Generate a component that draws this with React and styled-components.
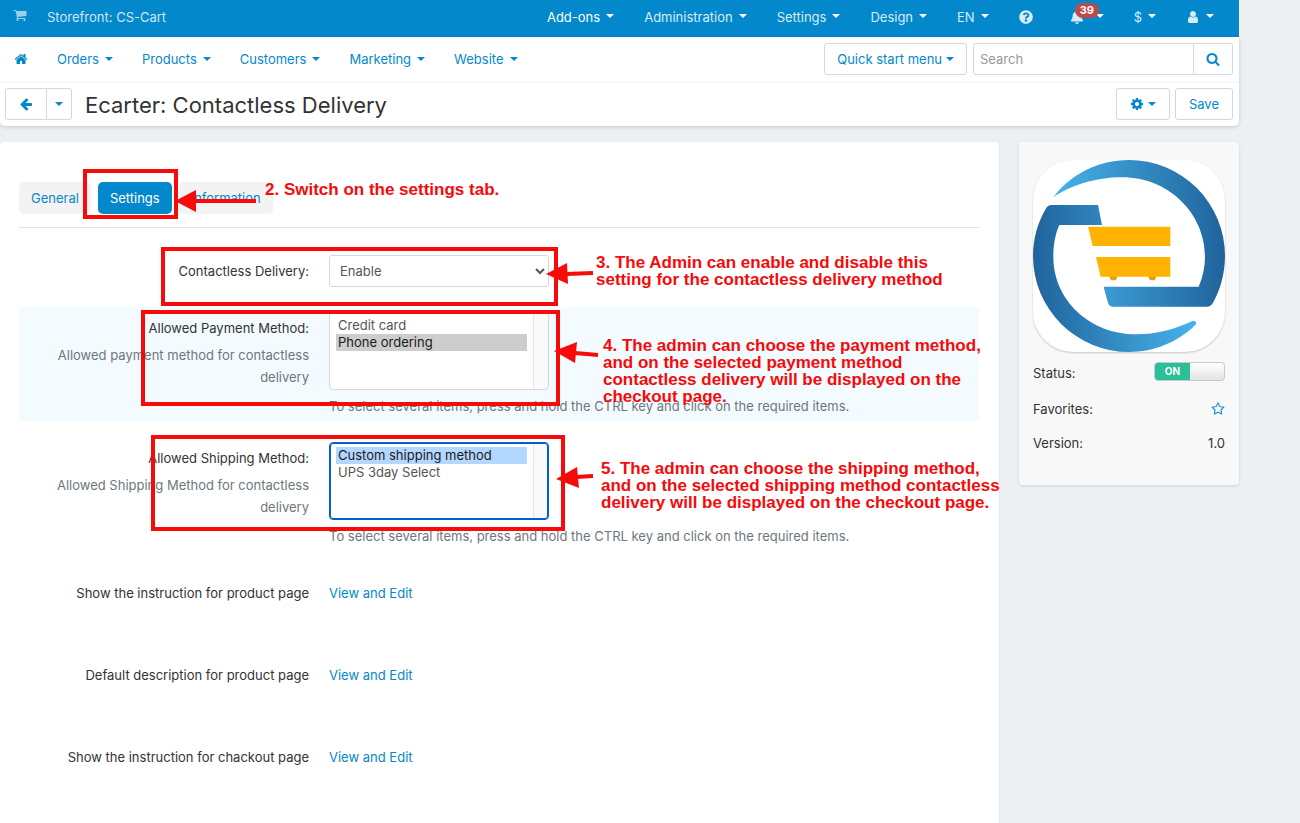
import React from "react";
import styled, { createGlobalStyle, css } from "styled-components";
import { FaBell, FaQuestionCircle } from "react-icons/fa";

const color = {
  brand: "#0388cc",
  page: "#ecf0f3",
  text: "#333333",
  muted: "#6d7780",
  line: "#d0d9e0",
  mark: "#f60a0a",
};

const Global = createGlobalStyle`
  * { box-sizing: border-box; }
  body {
    margin: 0;
    background: ${color.page};
    color: ${color.text};
    font: 13px/22px Inter, "Liberation Sans", sans-serif;
  }
  button, input, select { font: inherit; }
  a { color: ${color.brand}; text-decoration: none; }
`;

const Shell = styled.div`
  padding-right: 61px;
`;

const TopBar = styled.header`
  display: flex;
  align-items: center;
  height: 37px;
  padding: 0 25px 4px 13px;
  background: ${color.brand};
  color: #cfe7f5;
`;

const Storefront = styled.a`
  display: flex;
  align-items: center;
  gap: 20px;
  color: #cfe7f5;
  svg { opacity: 0.75; margin-bottom: 4px; }
`;

const TopMenu = styled.nav`
  display: flex;
  gap: 30px;
  margin-left: auto;
`;

const MenuButton = styled.button`
  position: relative;
  display: flex;
  align-items: center;
  gap: ${(p) => p.$gap || "6px"};
  padding: 0;
  border: 0;
  background: none;
  white-space: nowrap;
  color: ${(p) => (p.$active ? "#ffffff" : p.$light ? "#d8ecf7" : color.brand)};
`;

const HelpButton = styled(MenuButton)`
  margin-right: 7px;
`;

const Caret = styled.span`
  border: 4px solid transparent;
  border-top-color: ${(p) => (p.$light ? "#ffffff" : "currentColor")};
  border-bottom-width: 0;
  margin-bottom: ${(p) => (p.$light ? "2px" : "0")};
`;

const Badge = styled.span`
  position: absolute;
  left: 5px;
  top: -3px;
  height: 15px;
  padding: 0 5px;
  border-radius: 8px;
  background: #bd4a48;
  color: #ffffff;
  font-size: 11px;
  font-weight: 700;
  line-height: 15px;
`;

const HeaderCard = styled.div`
  border-radius: 0 0 5px 5px;
  background: #ffffff;
  box-shadow: 0 1px 4px rgba(0, 0, 0, 0.16);
`;

const NavBar = styled.div`
  display: flex;
  align-items: center;
  height: 46px;
  padding: 0 6px 2px 14px;
  border-bottom: 1px solid #f2f4f6;
`;

const MainMenu = styled.nav`
  display: flex;
  align-items: center;
  gap: 29px;
`;

const HomeLink = styled.a`
  display: flex;
`;

const Tools = styled.div`
  display: flex;
  gap: ${(p) => p.$gap || "6px"};
  margin-left: auto;
`;

const Button = styled.button`
  display: flex;
  align-items: center;
  justify-content: center;
  gap: 4px;
  height: 32px;
  padding: 0 ${(p) => p.$pad || "13px"};
  border: 1px solid ${color.line};
  border-radius: 3px;
  background: #ffffff;
  color: ${color.brand};
  white-space: nowrap;
`;

const Joined = styled.div`
  display: flex;
  > :first-child { border-radius: 3px 0 0 3px; }
  > :last-child { border-radius: 0 3px 3px 0; border-left-width: 0; }
`;

const BackButton = styled(Button)`
  width: 42px;
`;

const BackMenuButton = styled(Button)`
  width: 25px;
`;

const SearchInput = styled.input`
  width: 221px;
  height: 32px;
  padding: 0 6px;
  border: 1px solid ${color.line};
  &::placeholder { color: #999999; opacity: 1; }
`;

const ActionBar = styled.div`
  display: flex;
  align-items: center;
  height: 43px;
  padding: 0 6px 2px 5px;
`;

const Title = styled.h1`
  margin: 0 0 0 13px;
  padding-top: 2px;
  font-size: 22px;
  font-weight: 400;
  line-height: 32px;
`;

const Body = styled.main`
  display: flex;
  align-items: flex-start;
  gap: 20px;
  margin-top: 16px;
`;

const Panel = styled.section`
  position: relative;
  flex: 1;
  min-height: calc(100vh - 142px);
  padding: 40px 20px 32px 19px;
  border-radius: 4px 4px 0 0;
  background: #ffffff;
  box-shadow: 0 1px 3px rgba(0, 0, 0, 0.08);
`;

const Tabs = styled.div`
  display: flex;
  gap: 7px;
  padding-bottom: 13px;
  border-bottom: 1px solid #e0e3ea;
`;

const Tab = styled.button`
  height: 32px;
  padding: 0 12px;
  border: 0;
  border-radius: 5px;
  background: ${(p) => (p.$active ? color.brand : "#f3f3f3")};
  color: ${(p) => (p.$active ? "#ffffff" : color.brand)};
`;

const Form = styled.form`
  display: flex;
  flex-direction: column;
  gap: 16px;
  padding-top: 22px;
`;

const Row = styled.div`
  display: grid;
  grid-template-columns: 290px 1fr;
  column-gap: 20px;
  padding: 5px 0 4px;
  background: ${(p) => (p.$shaded ? "#f3fbff" : "transparent")};
`;

const LinkRow = styled(Row)`
  min-height: 66px;
  padding-top: 15px;
`;

const LabelCell = styled.div`
  padding-top: ${(p) => (p.$flush ? "0" : "5px")};
  text-align: right;
`;

const Label = styled.label`
  display: block;
`;

const Note = styled.p`
  margin: 5px 0 0 20px;
  color: ${color.muted};
`;

const Hint = styled.p`
  margin: 5px 0 0;
  color: ${color.muted};
`;

const Select = styled.select`
  display: block;
  width: 220px;
  height: 32px;
  padding: 0 6px;
  border: 1px solid ${color.line};
  border-radius: 3px;
  background: #ffffff;
  color: #555555;
`;

const ListBox = styled.select`
  display: block;
  width: 220px;
  height: 78px;
  padding: 4px 21px 4px 6px;
  overflow: hidden;
  border: 1px solid ${color.line};
  border-radius: 4px;
  background: linear-gradient(to right, #e4e4e4 1px, #fafafa 1px) right / 15px 100% no-repeat #ffffff;
  color: #555555;
  outline: none;
  ${(p) =>
    p.$focused &&
    css`
      border-color: #0060cc;
      box-shadow: inset 0 0 0 1px #0060cc;
    `}
  option {
    min-height: 17px;
    padding: 0 2px;
    line-height: 17px;
  }
  option:checked {
    background: ${(p) =>
      p.$focused ? "linear-gradient(#b3d7ff, #b3d7ff)" : "linear-gradient(#cdcdcd, #cdcdcd)"};
    color: #1a1a1a;
    -webkit-text-fill-color: #1a1a1a;
  }
`;

const Sidebar = styled.aside`
  flex: none;
  width: 220px;
  padding: 18px 14px 31px;
  border-radius: 3px;
  background: #f8f8f8;
  box-shadow: 0 1px 3px rgba(0, 0, 0, 0.12);
`;

const LogoTile = styled.div`
  height: 192px;
  margin-bottom: 10px;
  overflow: hidden;
  border-radius: 40px;
  background: #ffffff;
  box-shadow: 0 1px 2px rgba(0, 0, 0, 0.2);
  svg { display: block; }
`;

const Fact = styled.div`
  display: flex;
  justify-content: space-between;
  align-items: ${(p) => (p.$top ? "flex-start" : "center")};
  min-height: ${(p) => (p.$top ? "24px" : "22px")};
  & + & { margin-top: 12px; }
`;

const StarButton = styled.button`
  display: flex;
  padding: 0;
  border: 0;
  background: none;
  color: ${color.brand};
`;

const Switch = styled.label`
  position: relative;
  display: flex;
  width: 71px;
  height: 19px;
  overflow: hidden;
  border: 1px solid #c9c9c9;
  border-radius: 4px;
  background: linear-gradient(#ffffff, #e4e4e4);
  input {
    position: absolute;
    inset: 0;
    margin: 0;
    opacity: 0;
  }
  span {
    width: 35px;
    background: #2abf96;
    color: #ffffff;
    font-size: 10px;
    font-weight: 700;
    line-height: 17px;
    text-align: center;
  }
`;

const Overlay = styled.div`
  position: absolute;
  inset: 0;
  pointer-events: none;
  color: ${color.mark};
  font: 700 17px/17px "Liberation Sans", Arial, sans-serif;
`;

const Frame = styled.div`
  position: absolute;
  left: ${(p) => p.$x}px;
  top: ${(p) => p.$y}px;
  width: ${(p) => p.$w}px;
  height: ${(p) => p.$h}px;
  border: 4px solid ${color.mark};
`;

const Callout = styled.p`
  position: absolute;
  left: ${(p) => p.$x}px;
  top: ${(p) => p.$y}px;
  margin: 0;
  white-space: pre;
`;

const Arrows = styled.svg`
  position: absolute;
  left: 0;
  top: 0;
`;

const frames = [
  { x: 83, y: 27, w: 95, h: 50 },
  { x: 161, y: 105, w: 397, h: 59 },
  { x: 141, y: 168, w: 419, h: 96 },
  { x: 151, y: 293, w: 414, h: 96 },
];

const arrows = [
  { head: "175,59 196,48 196,70", line: [195, 59, 256, 59] },
  { head: "546,132 567,121 568,142", line: [566, 132, 593, 131] },
  { head: "554,209 577,200 575,221", line: [575, 211, 598, 213] },
  { head: "556,337 577,325 579,346", line: [576, 335, 593, 334] },
];

const callouts = [
  { x: 265, y: 39, text: "2. Switch on the settings tab." },
  {
    x: 596,
    y: 112,
    text: "3. The Admin can enable and disable this\nsetting for the contactless delivery method",
  },
  {
    x: 603,
    y: 195,
    text:
      "4. The admin can choose the payment method,\nand on the selected payment method\ncontactless delivery will be displayed on the\ncheckout page.",
  },
  {
    x: 601,
    y: 318,
    text:
      "5. The admin can choose the shipping method,\nand on the selected shipping method contactless\ndelivery will be displayed on the checkout page.",
  },
];

const iconPaths = {
  home:
    "M1472 992v480q0 26-19 45t-45 19h-384v-384h-256v384h-384q-26 0-45-19t-19-45v-480q0-1 .5-3t.5-3l575-474 575 474q1 2 1 6zm223-69l-62 74q-8 9-21 11h-3q-13 0-21-7l-692-577-692 577q-12 8-24 7-13-2-21-11l-62-74q-8-10-7-23.5t11-21.5l719-599q32-26 76-26t76 26l244 204v-195q0-14 9-23t23-9h192q14 0 23 9t9 23v408l219 182q10 8 11 21.5t-7 23.5z",
  back:
    "M1664 896v128q0 53-32.5 90.5t-84.5 37.5h-704l293 294q38 36 38 90t-38 90l-75 76q-37 37-90 37-52 0-91-37l-651-652q-37-37-37-90 0-52 37-91l651-650q38-38 91-38 52 0 90 38l75 74q38 38 38 91t-38 91l-293 293h704q52 0 84.5 37.5t32.5 90.5z",
  search:
    "M1216 832q0-185-131.5-316.5t-316.5-131.5-316.5 131.5-131.5 316.5 131.5 316.5 316.5 131.5 316.5-131.5 131.5-316.5zm512 832q0 52-38 90t-90 38q-54 0-90-38l-343-342q-179 124-399 124-143 0-273.5-55.5t-225-150-150-225-55.5-273.5 55.5-273.5 150-225 225-150 273.5-55.5 273.5 55.5 225 150 150 225 55.5 273.5q0 220-124 399l343 343q37 37 37 90z",
  cog:
    "M1152 896q0-106-75-181t-181-75-181 75-75 181 75 181 181 75 181-75 75-181zm512-109v222q0 12-8 23t-20 13l-185 28q-19 54-39 91 35 50 107 138 10 12 10 25t-9 23q-27 37-99 108t-94 71q-12 0-26-9l-138-108q-44 23-91 38-16 136-29 186-7 28-36 28h-222q-14 0-24.5-8.5t-11.5-21.5l-28-184q-49-16-90-37l-141 107q-10 9-25 9-14 0-25-11-126-114-165-168-7-10-7-23 0-12 8-23 15-21 51-66.5t54-70.5q-27-50-41-99l-183-27q-13-2-21-12.5t-8-23.5v-222q0-12 8-23t19-13l186-28q14-46 39-92-40-57-107-138-10-12-10-24 0-10 9-23 26-36 98.5-107.5t94.5-71.5q13 0 26 10l138 107q44-23 91-38 16-136 29-186 7-28 36-28h222q14 0 24.5 8.5t11.5 21.5l28 184q49 16 90 37l142-107q9-9 24-9 13 0 25 10 129 119 165 170 7 8 7 22 0 12-8 23-15 21-51 66.5t-54 70.5q26 50 41 98l183 28q13 2 21 12.5t8 23.5z",
  user:
    "M1536 1399q0 109-62.5 187t-150.5 78h-854q-88 0-150.5-78t-62.5-187q0-85 8.5-160.5t31.5-152 58.5-131 94-89 134.5-34.5q131 128 313 128t313-128q76 0 134.5 34.5t94 89 58.5 131 31.5 152 8.5 160.5zm-256-887q0 159-112.5 271.5t-271.5 112.5-271.5-112.5-112.5-271.5 112.5-271.5 271.5-112.5 271.5 112.5 112.5 271.5z",
  cart:
    "M704 1536q0 52-38 90t-90 38-90-38-38-90 38-90 90-38 90 38 38 90zm896 0q0 52-38 90t-90 38-90-38-38-90 38-90 90-38 90 38 38 90zm128-1088v512q0 24-16.5 42.5t-40.5 21.5l-1044 122q13 60 13 70 0 16-24 64h920q26 0 45 19t19 45-19 45-45 19h-1024q-26 0-45-19t-19-45q0-11 8-31.5t16-36 21.5-40 15.5-29.5l-177-823h-204q-26 0-45-19t-19-45 19-45 45-19h256q16 0 28.5 6.5t19.5 15.5 13 24.5 8 26 5.5 29.5 4.5 26h1201q26 0 45 19t19 45z",
  star:
    "M1201 1004l306-297-422-62-189-382-189 382-422 62 306 297-73 421 378-199 377 199zm527-357q0 22-26 48l-363 354 86 500q1 7 1 20 0 50-41 50-19 0-40-12l-449-236-449 236q-22 12-40 12-21 0-31.5-14.5t-10.5-35.5q0-6 2-20l86-500-364-354q-25-27-25-48 0-37 56-46l502-73 225-455q19-41 49-41t49 41l225 455 502 73q56 9 56 46z",
};

const Icon = ({ name, size = 14 }) => (
  <svg viewBox="0 0 1792 1792" width={size} height={size} fill="currentColor" aria-hidden="true">
    <path d={iconPaths[name]} />
  </svg>
);

const Logo = () => (
  <svg viewBox="0 0 576 576" width="192" height="192" role="img" aria-label="Ecarter">
    <defs>
      <linearGradient id="ring-top" x1="0" x2="1" y1="0" y2="0">
        <stop offset="0" stopColor="#47b3ea" />
        <stop offset="1" stopColor="#20639c" />
      </linearGradient>
      <linearGradient id="ring-bottom" x1="0" x2="1" y1="0" y2="0">
        <stop offset="0" stopColor="#20639c" />
        <stop offset="1" stopColor="#47b3ea" />
      </linearGradient>
    </defs>
    <path
      fill="url(#ring-top)"
      d="M60 113C112 43 196 0 288 0A288 288 0 0 1 576 288C576 340 562 390 540 428Q533 440 522 440H239Q229 440 225 428Q220 412 212 380H497C510 350 516 320 516 290C516 160 406 52 268 52C190 52 110 76 60 113Z"
    />
    <path
      fill="url(#ring-bottom)"
      d="M195 135L207 195H79C67 222 61 252 61 290C61 420 170 523 311 523C370 523 425 508 478 483Q486 480 489 487Q491 493 483 499C432 547 364 576 288 576A288 288 0 0 1 0 288C0 236 14 188 38 147Q44 135 55 135Z"
    />
    <circle cx="241" cy="350" r="11" fill="#e69f09" />
    <circle cx="358" cy="350" r="11" fill="#e69f09" />
    <path fill="#ffb300" d="M165 200H412V258H179ZM189 291H412V350H203Z" />
  </svg>
);

const TopItem = ({ children, active }) => (
  <MenuButton type="button" $light $active={active}>
    {children}
    <Caret $light />
  </MenuButton>
);

export default function App() {
  return (
    <>
      <Global />
      <Shell>
        <TopBar>
          <Storefront href="#storefront">
            <Icon name="cart" />
            Storefront: CS-Cart
          </Storefront>
          <TopMenu aria-label="Administration">
            <TopItem active>Add-ons</TopItem>
            <TopItem>Administration</TopItem>
            <TopItem>Settings</TopItem>
            <TopItem>Design</TopItem>
            <TopItem>EN</TopItem>
            <HelpButton type="button" $light aria-label="Help">
              <FaQuestionCircle size={14} />
            </HelpButton>
            <MenuButton type="button" $light $gap="12px" aria-label="Notifications">
              <FaBell size={14} />
              <Caret $light />
              <Badge>39</Badge>
            </MenuButton>
            <TopItem>$</TopItem>
            <TopItem>
              <Icon name="user" />
            </TopItem>
          </TopMenu>
        </TopBar>
        <HeaderCard>
          <NavBar>
            <MainMenu aria-label="Store">
              <HomeLink href="#home" aria-label="Home">
                <Icon name="home" />
              </HomeLink>
              {["Orders", "Products", "Customers", "Marketing", "Website"].map((name) => (
                <MenuButton type="button" key={name}>
                  {name}
                  <Caret />
                </MenuButton>
              ))}
            </MainMenu>
            <Tools>
              <Button type="button" $pad="12px">
                Quick start menu
                <Caret />
              </Button>
              <Joined>
                <SearchInput placeholder="Search" aria-label="Search" />
                <Button type="button" $pad="12px" aria-label="Find">
                  <Icon name="search" />
                </Button>
              </Joined>
            </Tools>
          </NavBar>
          <ActionBar>
            <Joined>
              <BackButton type="button" aria-label="Back">
                <Icon name="back" />
              </BackButton>
              <BackMenuButton type="button" $pad="0" aria-label="History">
                <Caret />
              </BackMenuButton>
            </Joined>
            <Title>Ecarter: Contactless Delivery</Title>
            <Tools $gap="5px">
              <Button type="button" aria-label="Actions">
                <Icon name="cog" />
                <Caret />
              </Button>
              <Button type="button">Save</Button>
            </Tools>
          </ActionBar>
        </HeaderCard>
        <Body>
          <Panel>
            <Tabs>
              <Tab type="button">General</Tab>
              <Tab type="button" $active>
                Settings
              </Tab>
              <Tab type="button">Information</Tab>
            </Tabs>
            <Form>
              <Row>
                <LabelCell>
                  <Label htmlFor="delivery">Contactless Delivery:</Label>
                </LabelCell>
                <Select id="delivery" defaultValue="enable">
                  <option value="enable">Enable</option>
                  <option value="disable">Disable</option>
                </Select>
              </Row>
              <Row $shaded>
                <LabelCell>
                  <Label htmlFor="payment">Allowed Payment Method:</Label>
                  <Note>Allowed payment method for contactless delivery</Note>
                </LabelCell>
                <div>
                  <ListBox id="payment" multiple size={4} defaultValue={["phone"]}>
                    <option value="card">Credit card</option>
                    <option value="phone">Phone ordering</option>
                  </ListBox>
                  <Hint>
                    To select several items, press and hold the CTRL key and click on the required items.
                  </Hint>
                </div>
              </Row>
              <Row>
                <LabelCell>
                  <Label htmlFor="shipping">Allowed Shipping Method:</Label>
                  <Note>Allowed Shipping Method for contactless delivery</Note>
                </LabelCell>
                <div>
                  <ListBox id="shipping" multiple size={4} defaultValue={["custom"]} $focused>
                    <option value="custom">Custom shipping method</option>
                    <option value="ups">UPS 3day Select</option>
                  </ListBox>
                  <Hint>
                    To select several items, press and hold the CTRL key and click on the required items.
                  </Hint>
                </div>
              </Row>
              {[
                "Show the instruction for product page",
                "Default description for product page",
                "Show the instruction for chackout page",
              ].map((text) => (
                <LinkRow key={text}>
                  <LabelCell $flush>{text}</LabelCell>
                  <a href="#edit">View and Edit</a>
                </LinkRow>
              ))}
            </Form>
            <Overlay>
              {frames.map((f) => (
                <Frame key={f.y} $x={f.x} $y={f.y} $w={f.w} $h={f.h} />
              ))}
              <Arrows width="620" height="400" fill={color.mark} stroke={color.mark} aria-hidden="true">
                {arrows.map(({ head, line: [x1, y1, x2, y2] }) => (
                  <g key={head}>
                    <polygon points={head} stroke="none" />
                    <line x1={x1} y1={y1} x2={x2} y2={y2} strokeWidth="4" />
                  </g>
                ))}
              </Arrows>
              {callouts.map((c) => (
                <Callout key={c.y} $x={c.x} $y={c.y}>
                  {c.text}
                </Callout>
              ))}
            </Overlay>
          </Panel>
          <Sidebar>
            <LogoTile>
              <Logo />
            </LogoTile>
            <Fact $top>
              Status:
              <Switch>
                <input type="checkbox" defaultChecked aria-label="Status" />
                <span>ON</span>
              </Switch>
            </Fact>
            <Fact>
              Favorites:
              <StarButton type="button" aria-label="Add to favorites">
                <Icon name="star" />
              </StarButton>
            </Fact>
            <Fact>
              Version:
              <span>1.0</span>
            </Fact>
          </Sidebar>
        </Body>
      </Shell>
    </>
  );
}
